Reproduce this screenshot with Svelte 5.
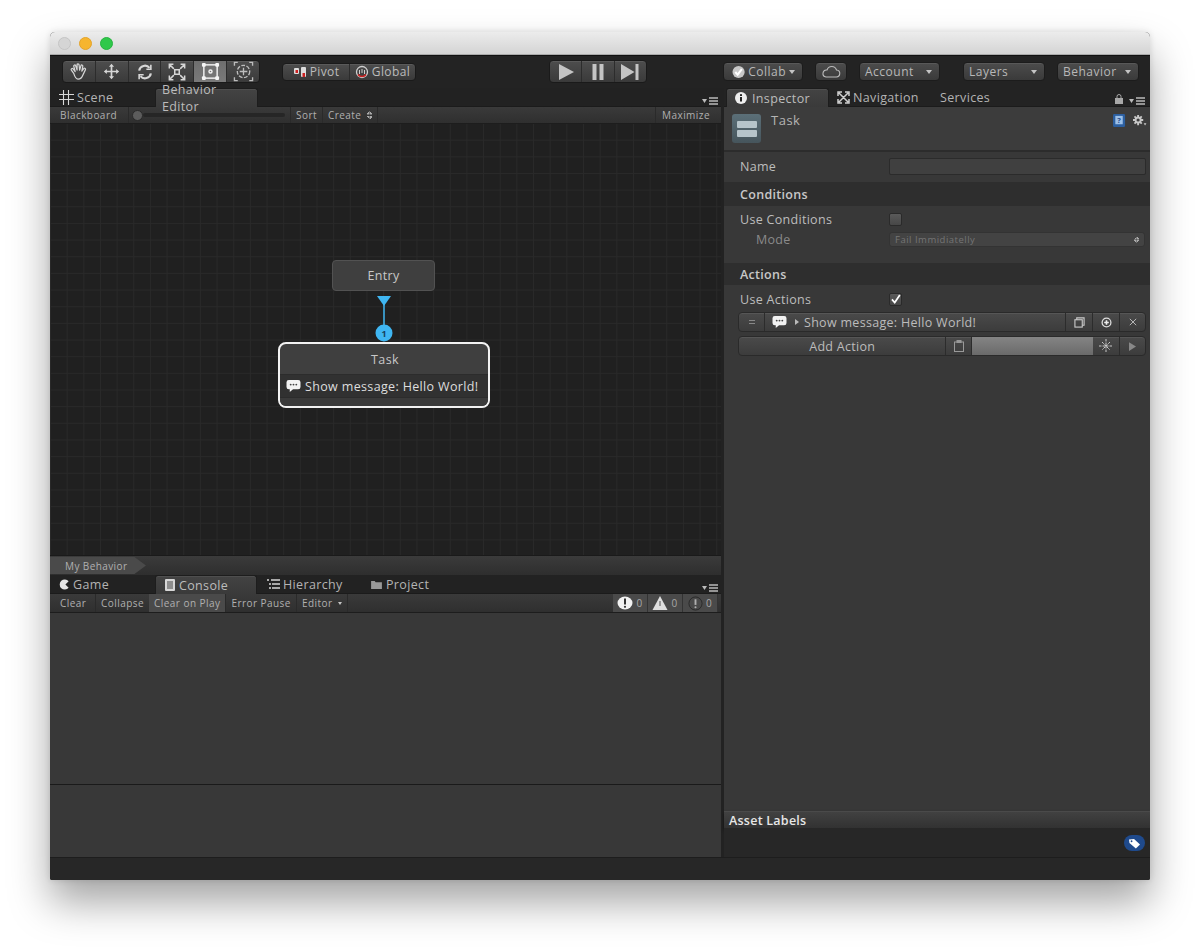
<script>
	const consoleButtons = [
		{ label: 'Clear on Play', active: true },
		{ label: 'Error Pause', active: false }
	];
	const counts = ['error', 'warn', 'info'];
</script>

{#snippet chat()}
	<svg class="chat" viewBox="0 0 16 15" width="15" height="14">
		<path d="M3 1h10a2.500 2.500 0 0 1 2.500 2.500v5A2.500 2.500 0 0 1 13 11H7.500L4 14v-3H3A2.500 2.500 0 0 1 .5 8.500v-5A2.500 2.500 0 0 1 3 1z" fill="#f2f2f2" />
		<circle cx="5" cy="6" r="1" fill="#444" /><circle cx="8" cy="6" r="1" fill="#444" /><circle cx="11" cy="6" r="1" fill="#444" />
	</svg>
{/snippet}

<div class="window">
	<header class="titlebar">
		<span class="light grey"></span>
		<span class="light yellow"></span>
		<span class="light green"></span>
	</header>

	<div class="toolbar">
		<div class="btn-group tools">
			<button class="tool">
				<svg viewBox="0 0 20 20" width="19" height="19" fill="none" stroke="#d6d6d6" stroke-width="1.300" stroke-linecap="round" stroke-linejoin="round"><path d="M5 12 2.500 8.500c-.8-1.300.8-2.300 1.800-1.200L6.500 10 5 4.500c-.3-1.400 1.500-1.900 2-.5l1.500 4.500L8.500 3c0-1.500 2-1.500 2.100 0l.6 5.500L12.500 4c.4-1.400 2.300-1 2 .5L13.500 9.500 15.500 7c1-1.200 2.500 0 1.700 1.300L14.500 14c-1 3-2.500 4-5 4-2.300 0-3.300-2-4.500-6z" /></svg>
			</button>
			<button class="tool">
				<svg viewBox="0 0 20 20" width="17" height="17" fill="#d6d6d6"><path d="M10 1l3 3.500h-2V9h4.500V7L19 10l-3.500 3v-2H11v4.500h2L10 19l-3-3.500h2V11H4.500v2L1 10l3.500-3v2H9V4.500H7z" /></svg>
			</button>
			<button class="tool">
				<svg viewBox="0 0 20 20" width="18" height="18" fill="none" stroke="#d6d6d6" stroke-width="2.400"><path d="M3.500 8.500A6.500 6.500 0 0 1 15 5.500M16.500 11.500A6.500 6.500 0 0 1 5 14.500" /><path d="M16.500 2v5h-5" stroke-width="1.800" /><path d="M3.500 18v-5h5" stroke-width="1.800" /></svg>
			</button>
			<button class="tool">
				<svg viewBox="0 0 20 20" width="18" height="18" fill="none" stroke="#d6d6d6" stroke-width="1.700"><path d="M1.500 6V1.500H6M14 1.500h4.500V6M18.500 14v4.500H14M6 18.500H1.500V14M2 2l4.500 4.500M18 2l-4.500 4.500M18 18l-4.500-4.500M2 18l4.500-4.500" /><rect x="7.500" y="7.500" width="5" height="5" /></svg>
			</button>
			<button class="tool on">
				<svg viewBox="0 0 20 20" width="19" height="19" fill="none" stroke="#f4f4f4" stroke-width="1.500"><rect x="3" y="3" width="14" height="14" /><circle cx="10" cy="10" r="1.600" /><g fill="#f4f4f4" stroke="none"><rect x="1" y="1" width="4" height="4" rx="1" /><rect x="15" y="1" width="4" height="4" rx="1" /><rect x="1" y="15" width="4" height="4" rx="1" /><rect x="15" y="15" width="4" height="4" rx="1" /></g></svg>
			</button>
			<button class="tool">
				<svg viewBox="0 0 22 22" width="21" height="21" fill="none" stroke="#bdbdbd" stroke-width="1.400"><circle cx="11" cy="11" r="6.500" stroke-dasharray="4 1.500" /><path d="M11 7v8M7 11h8" /><path d="M1.500 5V1.500H5M17 1.500h3.500V5M20.500 17v3.500H17M5 20.500H1.500V17" /></svg>
			</button>
		</div>

		<div class="btn-group handles">
			<button class="handle first">
				<svg viewBox="0 0 14 12" width="14" height="12"><rect x="1" y="2" width="5" height="6" rx="1" fill="#ddd" /><rect x="8" y="1" width="5" height="10" rx="1" fill="#ddd" /><rect x="2.500" y="4" width="2.500" height="3" fill="#c22" /><rect x="9.500" y="7" width="2.500" height="4" fill="#c22" /></svg>
				Pivot
			</button>
			<button class="handle">
				<svg viewBox="0 0 14 14" width="14" height="14" fill="none"><circle cx="7" cy="7" r="5.500" stroke="#cfcfcf" stroke-width="1.300" /><path d="M3 9.500A5 5 0 0 0 11 9.500" stroke="#c22" stroke-width="1.500" /><path d="M7 4v4M4.500 5v4M9.500 5v4" stroke="#cfcfcf" /></svg>
				Global
			</button>
		</div>

		<div class="btn-group player">
			<button class="pl">
				<svg viewBox="0 0 18 16" width="18" height="16" fill="#c4c4c4"><path d="M2 0l15 8-15 8z" /></svg>
			</button>
			<button class="pl">
				<svg viewBox="0 0 14 16" width="14" height="16" fill="#c4c4c4"><rect x="1.500" width="4" height="16" /><rect x="8.500" width="4" height="16" /></svg>
			</button>
			<button class="pl">
				<svg viewBox="0 0 20 16" width="20" height="16" fill="#c4c4c4"><path d="M1 0l13.500 8L1 16z" /><rect x="15.500" width="3" height="16" /></svg>
			</button>
		</div>

		<button class="drop collab">
			<svg viewBox="0 0 14 14" width="14" height="14"><circle cx="7" cy="7" r="6.500" fill="#c8c8c8" /><path d="M3.500 7l2.500 2.800L10.500 4" fill="none" stroke="#fff" stroke-width="2.200" /></svg>
			<span>Collab</span><i class="caret"></i>
		</button>
		<button class="drop cloud">
			<svg viewBox="0 0 20 13" width="20" height="13" fill="none" stroke="#bbb" stroke-width="1.100"><path d="M5 12h10a3.500 3.500 0 0 0 .5-7A5 5 0 0 0 6 5a3.500 3.500 0 0 0-1 7z" /></svg>
		</button>
		<button class="drop account"><span>Account</span><i class="caret"></i></button>
		<button class="drop layers"><span>Layers</span><i class="caret"></i></button>
		<button class="drop behavior"><span>Behavior</span><i class="caret"></i></button>
	</div>

	<div class="main">
		<section class="left">
			<nav class="tabs">
				<div class="tab wide">
					<svg viewBox="0 0 15 15" width="15" height="15" stroke="#d8d8d8" stroke-width="1.100"><path d="M4.500 0v15M9.500 0v15M0 4.500h15M0 9.500h15" /></svg>
					Scene
				</div>
				<div class="tab current behavior-tab">Behavior Editor</div>
				<svg class="pane-menu" viewBox="0 0 16 8" width="16" height="8"><path d="M0 2h5L2.500 6z" fill="#bbb" /><path d="M7 1h9M7 4h9M7 7h9" stroke="#bbb" stroke-width="1.300" /></svg>
			</nav>
			<div class="sub-bar scene-bar">
				<span class="sub-btn blackboard">Blackboard</span>
				<div class="slider"><span class="thumb"></span><span class="track"></span></div>
				<span class="sub-btn">Sort</span>
				<span class="sub-btn">Create <i class="updown"></i></span>
				<span class="sub-fill"></span>
				<span class="sub-btn maximize">Maximize</span>
			</div>

			<div class="canvas">
				<div class="node entry">Entry</div>
				<svg class="link" viewBox="0 0 20 47" width="20" height="47">
					<path d="M3 0h14l-7 10z" fill="#3fb6f2" />
					<path d="M10 8v30" stroke="#3fb6f2" stroke-width="1.500" />
					<circle cx="10" cy="37" r="8.500" fill="#3fb6f2" />
					<text x="10" y="40.500" text-anchor="middle" class="badge-num">1</text>
				</svg>
				<div class="node task">
					<div class="task-title">Task</div>
					<div class="task-action">{@render chat()}<span>Show message: Hello World!</span></div>
					<div class="task-foot"></div>
				</div>
			</div>

			<div class="breadcrumb"><span class="crumb">My Behavior</span></div>

			<nav class="tabs">
				<div class="tab wide">
					<svg viewBox="0 0 12 12" width="11" height="11"><path d="M10.500 2.500A5.500 5.500 0 1 0 10.500 9.500L7 6z" fill="#e4e4e4" /></svg>
					Game
				</div>
				<div class="tab current console-tab">
					<svg viewBox="0 0 10 12" width="10" height="12"><rect width="10" height="12" rx="1" fill="#d6d6d6" /><path d="M2 3h6M2 5h6M2 7h6M2 9h6" stroke="#444" /></svg>
					Console
				</div>
				<div class="tab hierarchy-tab">
					<svg viewBox="0 0 13 10" width="13" height="10" stroke="#d6d6d6" stroke-width="1.300"><path d="M0 1h2M4 1h9M2 5h2M5 5h8M2 9h2M5 9h8" /></svg>
					Hierarchy
				</div>
				<div class="tab project-tab">
					<svg viewBox="0 0 12 10" width="11" height="9"><path d="M0 1h4l1 1.500h7V10H0z" fill="#999" /></svg>
					Project
				</div>
				<svg class="pane-menu" viewBox="0 0 16 8" width="16" height="8"><path d="M0 2h5L2.500 6z" fill="#bbb" /><path d="M7 1h9M7 4h9M7 7h9" stroke="#bbb" stroke-width="1.300" /></svg>
			</nav>
			<div class="sub-bar console-bar">
				<span class="sub-btn clear">Clear</span>
				<span class="sub-btn collapse">Collapse</span>
				{#each consoleButtons as b}
					<span class="sub-btn" class:active={b.active}>{b.label}</span>
				{/each}
				<span class="sub-btn">Editor <i class="caret small"></i></span>
				<span class="sub-fill"></span>
				{#each counts as c}
					<span class="count">
						{#if c === 'error'}
							<svg viewBox="0 0 16 14" width="16" height="14"><ellipse cx="8" cy="7" rx="7.500" ry="6.500" fill="#f2f2f2" /><path d="M8 2.500v6" stroke="#333" stroke-width="2" /><circle cx="8" cy="10.800" r="1.100" fill="#333" /></svg>
						{:else if c === 'warn'}
							<svg viewBox="0 0 16 14" width="16" height="14"><path d="M8 0l7.500 14H.5z" fill="#e0e0e0" /><path d="M8 5v5" stroke="#888" stroke-width="1.600" /></svg>
						{:else}
							<svg viewBox="0 0 16 16" width="15" height="15"><circle cx="8" cy="8" r="7" fill="#4a4a4a" stroke="#2a2a2a" /><path d="M8 3.500v6" stroke="#b0b0b0" stroke-width="2" /><circle cx="8" cy="12" r="1.100" fill="#b0b0b0" /></svg>
						{/if}
						<span>0</span>
					</span>
				{/each}
			</div>
			<div class="console-list"></div>
			<div class="console-detail"></div>
		</section>

		<section class="right">
			<nav class="tabs">
				<div class="tab current inspector-tab">
					<svg viewBox="0 0 12 12" width="12" height="12"><circle cx="6" cy="6" r="6" fill="#eee" /><rect x="5" y="5" width="2" height="4.500" fill="#222" /><rect x="5" y="2.200" width="2" height="1.800" fill="#222" /></svg>
					Inspector
				</div>
				<div class="tab nav-tab">
					<svg viewBox="0 0 13 13" width="13" height="13" fill="none" stroke="#d0d0d0" stroke-width="1.500"><path d="M1 5V1h4M8 1h4v4M12 8v4H8M5 12H1V8M2 2l9 9M11 2l-9 9" /></svg>
					Navigation
				</div>
				<div class="tab services-tab">Services</div>
				<svg class="lock" viewBox="0 0 8 10" width="8" height="10"><rect y="4" width="8" height="6" fill="#a8a8a8" /><path d="M2 4V2.500a2 2 0 0 1 4 0V4" fill="none" stroke="#a8a8a8" /></svg>
				<svg class="pane-menu close" viewBox="0 0 16 8" width="16" height="8"><path d="M0 2h5L2.500 6z" fill="#bbb" /><path d="M7 1h9M7 4h9M7 7h9" stroke="#bbb" stroke-width="1.300" /></svg>
			</nav>

			<div class="insp-head">
				<div class="task-icon"><span></span><span></span></div>
				<div class="insp-title">Task</div>
				<svg class="help" viewBox="0 0 14 15" width="13" height="14"><rect width="13" height="14" rx="1.500" fill="#2c5fa0" /><rect x="2.500" y="2" width="8" height="9" fill="#9cc0e8" /><text x="6.500" y="9.800" text-anchor="middle" class="help-q">?</text></svg>
				<svg class="gear" viewBox="0 0 16 14" width="15" height="13"><g stroke="#c8c8c8" stroke-width="2"><path d="M6.500 1v11M1 6.500h11M2.600 2.600l7.800 7.800M10.400 2.600l-7.800 7.800" /></g><circle cx="6.500" cy="6.500" r="3.800" fill="#c8c8c8" /><circle cx="6.500" cy="6.500" r="1.700" fill="#3c3c3c" /><path d="M12.500 10h3l-1.500 2.500z" fill="#c8c8c8" /></svg>
			</div>

			<div class="row name-row">
				<label for="task-name">Name</label>
				<input id="task-name" class="name-input" />
			</div>

			<div class="section-head cond-head">Conditions</div>
			<div class="row use-row">
				<span class="lbl">Use Conditions</span>
				<span class="check"></span>
			</div>
			<div class="row mode-row">
				<span class="lbl indent">Mode</span>
				<div class="select">Fail Immidiatelly <i class="updown"></i></div>
			</div>

			<div class="section-head act-head">Actions</div>
			<div class="row use-row actions-use">
				<span class="lbl">Use Actions</span>
				<span class="check">
					<svg viewBox="0 0 14 14" width="14" height="14"><path d="M2.500 7.500 6 11.500 12.500 2" fill="none" stroke="#fff" stroke-width="2.200" /></svg>
				</span>
			</div>

			<div class="action-row">
				<span class="seg grip"><i></i></span>
				<span class="seg action-main">
					{@render chat()}
					<i class="tri"></i>
					<span>Show message: Hello World!</span>
				</span>
				<span class="seg act-sq">
					<svg viewBox="0 0 12 12" width="11" height="11" fill="none" stroke="#ccc" stroke-width="1.200"><rect x="1" y="3" width="8" height="8" /><path d="M3 3V1h8v8H9" /></svg>
				</span>
				<span class="seg act-sq">
					<svg viewBox="0 0 12 12" width="11" height="11"><circle cx="6" cy="6" r="4.800" fill="none" stroke="#ddd" stroke-width="1.400" /><path d="M3.500 6h5M6 3.500v5" stroke="#eee" stroke-width="1.800" /></svg>
				</span>
				<span class="seg act-sq">
					<svg viewBox="0 0 10 10" width="8" height="8" stroke="#bbb" stroke-width="1.200"><path d="M1 1l8 8M9 1l-8 8" /></svg>
				</span>
			</div>

			<div class="add-row">
				<span class="seg add-btn">Add Action</span>
				<span class="seg add-clip">
					<svg viewBox="0 0 10 12" width="10" height="12" fill="none" stroke="#999"><rect x=".5" y="2" width="9" height="9.500" /><rect x="3" y=".5" width="4" height="2" fill="#999" /></svg>
				</span>
				<span class="add-meter"></span>
				<span class="seg act-sq">
					<svg viewBox="0 0 14 14" width="14" height="14" fill="none" stroke="#c8c8c8"><path d="M7 0v14M0 7h14M3 3l8 8M11 3l-8 8" stroke-dasharray="2.500 1" /></svg>
				</span>
				<span class="seg act-sq">
					<svg viewBox="0 0 8 10" width="7" height="9"><path d="M0 0l8 5-8 5z" fill="#888" /></svg>
				</span>
			</div>

			<div class="insp-fill"></div>

			<div class="labels-head">Asset Labels</div>
			<div class="labels-body">
				<span class="tag-pill">
					<svg viewBox="0 0 14 12" width="13" height="11"><path d="M1 1.500 6.500 1 13 7l-4.500 4.500L1.500 5.500z" fill="#fff" /><circle cx="3.800" cy="3.500" r="1" fill="#1f4a8c" /></svg>
				</span>
			</div>
		</section>
	</div>

	<footer class="status"></footer>
</div>

<style>
	:global(body) {
		background: #fff;
	}

	* {
		box-sizing: border-box;
	}

	.window {
		width: 1100px;
		height: 848px;
		margin: 32px 50px 70px;
		display: flex;
		flex-direction: column;
		background: #222;
		border-radius: 5px 5px 2px 2px;
		box-shadow: 0 22px 40px rgba(0, 0, 0, 0.36), 0 0 6px rgba(0, 0, 0, 0.12);
		font-family: "Open Sans", "Liberation Sans", sans-serif;
		font-size: 11px;
		color: #bdbdbd;
		overflow: hidden;
	}

	.titlebar {
		height: 23px;
		flex: none;
		display: flex;
		align-items: center;
		gap: 8px;
		padding-left: 8px;
		background: linear-gradient(#ececec, #d4d4d4);
		border-bottom: 1px solid #aaa;
	}

	.light {
		width: 13px;
		height: 13px;
		border-radius: 50%;
	}
	.grey { background: #d5d5d5; border: 1px solid #c4c4c4; }
	.yellow { background: #f6b52f; border: 1px solid #e3a32a; }
	.green { background: #2fc84a; border: 1px solid #27b33f; }

	/* top toolbar */
	.toolbar {
		height: 33px;
		flex: none;
		display: flex;
		align-items: center;
		padding-left: 12px;
		background: #232323;
		border-top: 1px solid #111;
	}

	button {
		font: inherit;
		color: inherit;
		padding: 0;
		border: 0;
		background: none;
	}

	.btn-group {
		display: flex;
		border-radius: 4px;
		overflow: hidden;
		border: 1px solid #1a1a1a;
		box-shadow: inset 0 1px 0 #5a5a5a;
		background: linear-gradient(#4d4d4d, #3a3a3a);
	}

	.tools {
		width: 198px;
		height: 23px;
		margin-bottom: 1px;
	}

	.tool {
		flex: 1;
		display: flex;
		align-items: center;
		justify-content: center;
		border-right: 1px solid #2c2c2c;
	}
	.tool:last-child { border-right: 0; }
	.tool.on { background: linear-gradient(#6e6e6e, #7a7a7a); }

	.handles {
		width: 134px;
		height: 18px;
		margin-left: 22px;
		margin-bottom: 1px;
	}

	.handle {
		flex: 1;
		display: flex;
		align-items: center;
		justify-content: center;
		gap: 3px;
		font-size: 12px;
		letter-spacing: 0.4px;
		color: #bcbcbc;
	}
	.handle.first { border-right: 1px solid #2c2c2c; flex: 0 0 67px; }

	.player {
		width: 98px;
		height: 23px;
		margin-left: 133px;
		margin-bottom: 1px;
	}

	.pl {
		flex: 1;
		display: flex;
		align-items: center;
		justify-content: center;
		border-right: 1px solid #2c2c2c;
	}
	.pl:last-child { border-right: 0; }

	.drop {
		height: 19px;
		margin-bottom: 1px;
		display: flex;
		align-items: center;
		justify-content: space-between;
		padding: 0 7px 0 5px;
		border: 1px solid #1c1c1c;
		border-radius: 4px;
		background: linear-gradient(#4c4c4c, #3a3a3a);
		box-shadow: inset 0 1px 0 #585858;
		font-size: 12px;
		letter-spacing: 0.5px;
		color: #b8b8b8;
	}
	.collab { width: 80px; margin-left: 76px; gap: 3px; padding-left: 8px; }
	.collab span { flex: 1; text-align: left; }
	.cloud { width: 32px; margin-left: 12px; justify-content: center; padding: 0; }
	.account { width: 81px; margin-left: 12px; }
	.layers { width: 82px; margin-left: 23px; }
	.behavior { width: 82px; margin-left: 12px; }

	.caret {
		display: inline-block;
		width: 0;
		height: 0;
		border-left: 3.500px solid transparent;
		border-right: 3.500px solid transparent;
		border-top: 4px solid #c4c4c4;
	}
	.caret.small {
		border-left-width: 2.500px;
		border-right-width: 2.500px;
		border-top-width: 3px;
		vertical-align: 1px;
		margin-left: 2px;
	}

	/* main area */
	.main {
		flex: 1;
		min-height: 0;
		display: grid;
		grid-template-columns: 671px 426px;
		gap: 3px;
	}

	.left,
	.right {
		display: flex;
		flex-direction: column;
		min-height: 0;
	}

	.tabs {
		height: 19px;
		flex: none;
		display: flex;
		align-items: flex-end;
		position: relative;
		font-size: 12.500px;
		letter-spacing: 0.35px;
		color: #b4b4b4;
		border-bottom: 1px solid #1b1b1b;
	}

	.tab {
		height: 18px;
		display: flex;
		align-items: center;
		gap: 3px;
		flex: none;
	}

	.tab.wide {
		width: 105px;
		padding-left: 9px;
	}

	.tab.current {
		height: 19px;
		margin-bottom: -1px;
		background: linear-gradient(#434343, #3a3a3a);
		border: 1px solid #1d1d1d;
		border-bottom: 0;
		border-radius: 3px 3px 0 0;
		box-shadow: inset 0 1px 0 #4e4e4e;
		color: #bcbcbc;
	}

	.behavior-tab { width: 103px; padding-left: 6px; }
	.console-tab { width: 102px; padding-left: 9px; gap: 4px; }
	.hierarchy-tab { width: 105px; padding-left: 10px; }
	.project-tab { padding-left: 9px; gap: 4px; }
	.inspector-tab { width: 103px; margin-left: 2px; padding-left: 8px; gap: 5px; }
	.nav-tab { margin-left: 8px; width: 103px; }
	.services-tab { }

	.pane-menu {
		margin-left: auto;
		margin-right: 3px;
		margin-bottom: 1px;
	}
	.lock {
		margin-left: auto;
		margin-right: 6px;
		margin-bottom: 2px;
	}
	.pane-menu.close { margin-left: 0; margin-right: 5px; }

	.sub-bar {
		flex: none;
		display: flex;
		align-items: stretch;
		padding-left: 5px;
		background: linear-gradient(#3a3a3a, #2f2f2f);
		font-size: 10px;
		letter-spacing: 0.45px;
		color: #b0b0b0;
		border-bottom: 1px solid #1d1d1d;
	}

	.scene-bar { height: 17px; }
	.console-bar { height: 19px; }

	.sub-btn {
		display: flex;
		align-items: center;
		padding: 0 5px;
		border-right: 1px solid #2a2a2a;
		white-space: pre;
	}
	.sub-btn.active {
		background: #4a4a4a;
	}
	.blackboard { width: 74px; }
	.clear { width: 41px; }
	.collapse { border-right: 0; }
	.maximize { padding: 0 6px 0 6px; border-right: 0; border-left: 1px solid #2a2a2a; margin-right: 5px; }

	.sub-fill { flex: 1; }

	.slider {
		width: 162px;
		display: flex;
		align-items: center;
		padding: 0 5px 0 3px;
		border-right: 1px solid #2a2a2a;
	}
	.thumb {
		width: 11px;
		height: 11px;
		flex: none;
		border-radius: 50%;
		background: #5c5c5c;
		border: 1px solid #2a2a2a;
	}
	.track {
		flex: 1;
		height: 4px;
		border-radius: 2px;
		background: #262626;
	}

	.updown {
		display: inline-block;
		width: 5px;
		height: 8px;
		margin-left: 3px;
		background:
			linear-gradient(135deg, transparent 50%, #aaa 50%) 0 0 / 50% 3.500px no-repeat,
			linear-gradient(225deg, transparent 50%, #aaa 50%) 100% 0 / 50% 3.500px no-repeat,
			linear-gradient(45deg, transparent 50%, #aaa 50%) 0 100% / 50% 3.500px no-repeat,
			linear-gradient(315deg, transparent 50%, #aaa 50%) 100% 100% / 50% 3.500px no-repeat;
	}

	.canvas {
		height: 431px;
		flex: none;
		position: relative;
		background-color: #202020;
		background-image:
			linear-gradient(90deg, #292929 1px, transparent 1px),
			linear-gradient(#292929 1px, transparent 1px);
		background-size: 16.670px 16.670px;
		background-position: 0 -1px;
		overflow: hidden;
	}

	.node {
		position: absolute;
		color: #c8c8c8;
		font-size: 12.500px;
		letter-spacing: 0.35px;
	}

	.entry {
		left: 282px;
		top: 136px;
		width: 103px;
		height: 31px;
		display: flex;
		align-items: center;
		justify-content: center;
		background: #3f3f3f;
		border: 1px solid #525252;
		border-radius: 4px;
	}

	.link {
		position: absolute;
		left: 324px;
		top: 172px;
	}

	.badge-num {
		font: bold 9px "Open Sans", sans-serif;
		fill: #17415c;
	}

	.task {
		left: 228px;
		top: 218px;
		width: 212px;
		height: 66px;
		display: flex;
		flex-direction: column;
		background: #3f3f3f;
		border: 2px solid #f2f2f2;
		border-radius: 8px;
		overflow: hidden;
	}

	.task-title {
		height: 31px;
		flex: none;
		display: flex;
		align-items: center;
		justify-content: center;
		padding-left: 2px;
		border-bottom: 1px solid #2c2c2c;
	}

	.task-action {
		height: 23px;
		flex: none;
		display: flex;
		align-items: center;
		gap: 4px;
		padding-left: 6px;
		background: #313131;
		border-bottom: 1px solid #2c2c2c;
		color: #dedede;
	}

	.task-foot {
		flex: 1;
		background: #3a3a3a;
	}

	.breadcrumb {
		height: 20px;
		flex: none;
		background: linear-gradient(#3b3b3b, #2e2e2e);
		border-top: 1px solid #1a1a1a;
		padding-top: 1px;
	}

	.crumb {
		display: flex;
		align-items: center;
		width: 96px;
		height: 17px;
		padding-left: 15px;
		background: #4a4a4a;
		clip-path: polygon(0 0, 88% 0, 100% 50%, 88% 100%, 0 100%);
		font-size: 10px;
		letter-spacing: 0.4px;
		color: #b0b0b0;
	}

	.count {
		width: 35px;
		display: flex;
		align-items: center;
		justify-content: center;
		gap: 3px;
		background: #4a4a4a;
		border-right: 1px solid #333;
		color: #a8a8a8;
	}
	.count:last-child { margin-right: 3px; }

	.console-list {
		height: 171px;
		flex: none;
		background: #383838;
	}

	.console-detail {
		flex: 1;
		background: #383838;
		border-top: 1px solid #1a1a1a;
	}

	/* inspector */
	.right {
		background: #383838;
	}

	.right .tabs {
		background: #232323;
	}

	.insp-head {
		height: 45px;
		flex: none;
		display: flex;
		align-items: flex-start;
		padding: 7px 3px 0 8px;
		background: #3c3c3c;
		border-bottom: 2px solid #2c2c2c;
	}

	.task-icon {
		width: 29px;
		height: 29px;
		flex: none;
		display: flex;
		flex-direction: column;
		align-items: center;
		justify-content: center;
		gap: 2px;
		border-radius: 3px;
		background: linear-gradient(#5b6f78, #46555c);
	}
	.task-icon span {
		width: 20px;
		height: 7px;
		border-radius: 1px;
		background: #b6c4ca;
	}

	.insp-title {
		flex: 1;
		margin-left: 10px;
		font-size: 13px;
		letter-spacing: 0.5px;
		color: #b4b4b4;
		line-height: 10px;
		padding-top: 1px;
	}

	.help { margin-right: 6px; }
	.help-q { font: bold 8px "Open Sans", sans-serif; fill: #1d4a8a; }
	.gear { margin-top: 0; }

	.row {
		display: flex;
		align-items: center;
		padding-left: 16px;
		font-size: 12.500px;
		letter-spacing: 0.3px;
		color: #bdbdbd;
	}

	.row > label,
	.lbl {
		width: 149px;
		flex: none;
	}
	.lbl.indent {
		padding-left: 16px;
		color: #8a8a8a;
	}

	.name-row { height: 30px; padding-bottom: 1px; }

	.name-input {
		width: 257px;
		height: 17px;
		padding: 0;
		background: #404040;
		border: 1px solid #2b2b2b;
		border-radius: 2px;
	}

	.section-head {
		flex: none;
		display: flex;
		align-items: center;
		padding-left: 16px;
		background: #2e2e2e;
		font-size: 12.500px;
		font-weight: 600;
		letter-spacing: 0.3px;
		color: #c8c8c8;
	}
	.cond-head { height: 24px; margin-top: 0; }
	.act-head { height: 22px; margin-top: 16px; }

	.use-row { height: 26px; padding-top: 1px; }
	.actions-use { height: 27px; }

	.check {
		width: 13px;
		height: 13px;
		display: flex;
		align-items: center;
		justify-content: center;
		background: linear-gradient(#5a5a5a, #474747);
		border: 1px solid #2a2a2a;
		border-radius: 2px;
	}

	.mode-row { height: 15px; margin-top: 0; }

	.select {
		width: 256px;
		height: 15px;
		display: flex;
		align-items: center;
		justify-content: space-between;
		padding: 0 5px;
		font-size: 9.500px;
		letter-spacing: 0.5px;
		color: #757575;
		background: #434343;
		border: 1px solid #333;
		border-radius: 3px;
	}

	.action-row,
	.add-row {
		width: 408px;
		height: 20px;
		flex: none;
		margin-left: 14px;
		display: flex;
		border-radius: 4px;
		overflow: hidden;
		background: linear-gradient(#4a4a4a, #3c3c3c);
		border: 1px solid #2a2a2a;
		box-shadow: inset 0 1px 0 #565656;
		font-size: 12.500px;
		letter-spacing: 0.3px;
		color: #bcbcbc;
	}
	.action-row { margin-top: 0; }
	.add-row { margin-top: 4px; }

	.seg {
		display: flex;
		align-items: center;
		justify-content: center;
		border-right: 1px solid #2c2c2c;
	}
	.seg:last-child { border-right: 0; }

	.grip { width: 26px; }
	.grip i {
		width: 6px;
		height: 4px;
		border-top: 1px solid #888;
		border-bottom: 1px solid #888;
	}

	.action-main {
		flex: 1;
		justify-content: flex-start;
		padding-left: 7px;
		gap: 5px;
	}

	.tri {
		width: 0;
		height: 0;
		margin-left: 3px;
		border-top: 3px solid transparent;
		border-bottom: 3px solid transparent;
		border-left: 4px solid #bbb;
	}

	.act-sq { width: 27px; }
	.act-sq:last-child { width: 25px; }

	.add-btn { width: 208px; font-size: 12.500px; padding-right: 0; }
	.add-clip { width: 26px; }
	.add-meter {
		width: 121px;
		background: linear-gradient(#848484, #6a6a6a);
	}

	.insp-fill {
		flex: 1;
	}

	.labels-head {
		height: 17px;
		flex: none;
		display: flex;
		align-items: center;
		padding-left: 5px;
		background: linear-gradient(#414141, #323232);
		border-top: 1px solid #4a4a4a;
		font-size: 12.500px;
		font-weight: 600;
		letter-spacing: 0.25px;
		color: #e6e6e6;
		box-shadow: 0 2px 3px rgba(0, 0, 0, 0.5);
	}

	.labels-body {
		height: 29px;
		flex: none;
		display: flex;
		justify-content: flex-end;
		padding: 7px 5px 0 0;
		background: #272727;
	}

	.tag-pill {
		width: 21px;
		height: 16px;
		display: flex;
		align-items: center;
		justify-content: center;
		border-radius: 8px;
		background: #1f4a8c;
	}

	.chat { flex: none; }

	.status {
		height: 23px;
		flex: none;
		background: #272727;
		border-top: 1px solid #1d1d1d;
	}
</style>
